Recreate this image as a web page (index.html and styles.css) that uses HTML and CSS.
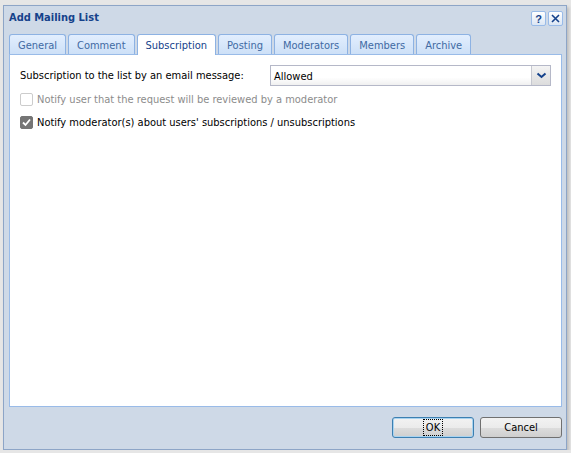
FILE: index.html
```html
<!DOCTYPE html>
<html>
<head>
<meta charset="utf-8">
<link rel="stylesheet" href="styles.css">
</head>
<body>
<div class="dialog">
  <div class="header">
    <span class="title">Add Mailing List</span>
    <div class="tools">
      <span class="tool">
        <svg width="15" height="15" viewBox="0 0 15 15"><text x="7.5" y="12" text-anchor="middle" class="qmark">?</text></svg>
      </span>
      <span class="tool">
        <svg width="15" height="15" viewBox="0 0 15 15"><path d="M4 4 L11 11 M11 4 L4 11" stroke="#15428b" stroke-width="1.6" fill="none"/></svg>
      </span>
    </div>
  </div>
  <div class="tabs">
    <span class="tab">General</span>
    <span class="tab">Comment</span>
    <span class="tab active">Subscription</span>
    <span class="tab">Posting</span>
    <span class="tab">Moderators</span>
    <span class="tab">Members</span>
    <span class="tab">Archive</span>
  </div>
  <div class="panel">
    <div class="row">
      <span class="label">Subscription to the list by an email message:</span>
      <div class="select">
        <span class="value">Allowed</span>
        <span class="arrow">
          <svg width="11" height="7" viewBox="0 0 11 7"><path d="M1.5 1.5 L5.5 5 L9.5 1.5" stroke="#15428b" stroke-width="2" fill="none"/></svg>
        </span>
      </div>
    </div>
    <div class="check disabled">
      <span class="box"></span>
      <span>Notify user that the request will be reviewed by a moderator</span>
    </div>
    <div class="check">
      <span class="box checked">
        <svg width="13" height="13" viewBox="0 0 13 13"><path d="M3 6.5 L5.5 9 L10 3.5" stroke="#fff" stroke-width="1.8" fill="none"/></svg>
      </span>
      <span>Notify moderator(s) about users' subscriptions / unsubscriptions</span>
    </div>
  </div>
  <div class="footer">
    <button class="btn focused"><span class="focus">OK</span></button>
    <button class="btn">Cancel</button>
  </div>
</div>
</body>
</html>
```
FILE: styles.css
```css
html, body {
  margin: 0;
  padding: 0;
  background: #e6e6e6;
  font-family: "DejaVu Sans Condensed", "DejaVu Sans", "Liberation Sans", sans-serif;
  font-size: 11px;
}
body {
  padding: 5px 0 0 3px;
}
.dialog {
  width: 562px;
  height: 443px;
  background: #ced9e7;
  border: 1px solid #8da5c7;
  box-shadow: 2px 2px 3px rgba(0,0,0,0.18);
  display: flex;
  flex-direction: column;
  box-sizing: content-box;
}
.header {
  height: 23px;
  display: flex;
  align-items: center;
  justify-content: space-between;
  padding: 0 3px 0 5px;
}
.title {
  font-weight: bold;
  color: #15428b;
  font-size: 11px;
}
.tools {
  display: flex;
  gap: 2px;
  margin-top: 2px;
}
.tool {
  width: 15px;
  height: 15px;
  box-sizing: border-box;
  border: 1px solid #99bbe8;
  border-radius: 2px;
  background: linear-gradient(#ffffff, #dbe6f4);
  display: flex;
  align-items: center;
  justify-content: center;
}
.tool svg { display: block; margin: -1px; }
.qmark {
  font-weight: bold;
  font-size: 11px;
  fill: #15428b;
  font-family: "Liberation Sans", sans-serif;
}
.tabs {
  display: flex;
  gap: 2px;
  padding-left: 5px;
  height: 21px;
  align-items: flex-end;
  margin-top: 4px;
}
.tab {
  height: 20px;
  box-sizing: border-box;
  padding: 1px 8px 0;
  border: 1px solid #8db2e3;
  border-bottom: none;
  border-radius: 3px 3px 0 0;
  background: linear-gradient(#e2eefe, #cde0f7);
  color: #416aa3;
  display: flex;
  align-items: center;
}
.tab.active {
  height: 21px;
  background: #fff;
  color: #15428b;
  margin-bottom: -1px;
  position: relative;
  z-index: 1;
}
.panel {
  margin-left: 5px;
  width: 553px;
  height: 353px;
  box-sizing: border-box;
  background: #fff;
  border: 1px solid #99bbe8;
  padding: 10px 10px 0 10px;
  color: #000;
}
.row {
  display: flex;
  align-items: center;
  height: 21px;
}
.label {
  width: 250px;
}
.select {
  width: 281px;
  height: 21px;
  box-sizing: border-box;
  border: 1px solid #b5b8c8;
  background: linear-gradient(#ffffff 0%, #ffffff 60%, #f0f0f0 100%);
  display: flex;
  align-items: center;
  justify-content: space-between;
}
.value {
  padding-left: 3px;
  padding-top: 1px;
}
.arrow {
  width: 18px;
  height: 19px;
  border-left: 1px solid #c6c8d0;
  background: linear-gradient(#f4f4f4, #dcdcdc);
  display: flex;
  align-items: center;
  justify-content: center;
}
.check {
  display: flex;
  align-items: center;
  gap: 4px;
  height: 16px;
  margin-top: 5px;
}
.check + .check { margin-top: 7px; }
.check.disabled { color: #8c8c8c; }
.box {
  width: 13px;
  height: 13px;
  box-sizing: border-box;
  border: 1px solid #cccccc;
  border-radius: 2px;
  background: #fff;
  display: flex;
  align-items: center;
  justify-content: center;
}
.box.checked {
  background: #757575;
  border-color: #757575;
}
.box svg { display: block; margin: -1px; }
.footer {
  display: flex;
  justify-content: flex-end;
  gap: 6px;
  padding: 10px 4px 0 0;
}
.btn {
  width: 82px;
  height: 21px;
  box-sizing: border-box;
  border: 1px solid #707070;
  border-radius: 3px;
  background: linear-gradient(#f2f2f2 0%, #ebebeb 50%, #dddddd 50%, #cfcfcf 100%);
  font-family: inherit;
  font-size: 11px;
  color: #000;
  padding: 0;
  display: flex;
  align-items: center;
  justify-content: center;
}
.btn.focused {
  border-color: #3c7fb1;
  box-shadow: inset 0 0 0 1px #a8d3f0;
}
.focus {
  outline: 1px dotted #000;
  padding: 1px 2px;
}
```
